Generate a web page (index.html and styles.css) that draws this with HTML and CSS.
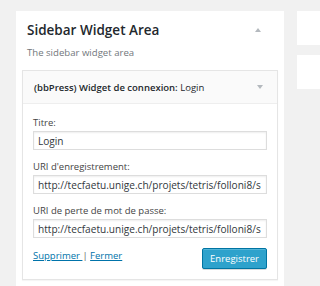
FILE: index.html
```html
<!DOCTYPE html>
<html>
<head>
<meta charset="utf-8">
<link rel="stylesheet" href="styles.css">
</head>
<body>
<div class="page">
  <div class="area">
    <div class="area-head">
      <h2 class="area-title">Sidebar Widget Area</h2>
      <span class="arrow-up"></span>
    </div>
    <p class="area-desc">The sidebar widget area</p>
    <div class="widget">
      <div class="widget-head">
        <span class="widget-title"><b>(bbPress) Widget de connexion:</b> Login</span>
        <span class="arrow-down"></span>
      </div>
      <div class="widget-body">
        <label class="field">
          <span class="lbl">Titre:</span>
          <input class="inp" type="text" value="Login">
        </label>
        <label class="field">
          <span class="lbl">URI d'enregistrement:</span>
          <input class="inp" type="text" value="http://tecfaetu.unige.ch/projets/tetris/folloni8/s">
        </label>
        <label class="field">
          <span class="lbl">URI de perte de mot de passe:</span>
          <input class="inp" type="text" value="http://tecfaetu.unige.ch/projets/tetris/folloni8/s">
        </label>
        <div class="actions">
          <div class="links"><a href="#">Supprimer </a> <span class="sep">|</span> <a href="#">Fermer</a></div>
          <button class="save">Enregistrer</button>
        </div>
      </div>
    </div>
  </div>
  <div class="side">
    <div class="side-box"></div>
    <div class="side-box"></div>
  </div>
</div>
</body>
</html>
```
FILE: styles.css
```css
html, body {
  margin: 0;
  padding: 0;
  background: #f1f1f1;
  font-family: "Open Sans", "Noto Sans", sans-serif;
  color: #444;
  overflow: hidden;
}
.page {
  display: flex;
  gap: 13px;
  padding: 11px 0 0 16px;
  height: 286px;
  box-sizing: border-box;
}
.area {
  width: 268px;
  flex: none;
  background: #fff;
  padding: 0 6px;
  box-sizing: border-box;
}
.area-head {
  display: flex;
  align-items: center;
  justify-content: space-between;
  padding: 9px 17px 0 5px;
}
.area-title {
  margin: 0;
  font-size: 13.5px;
  font-weight: 600;
  color: #23282d;
  line-height: 20px;
}
.arrow-up {
  width: 0; height: 0;
  border-left: 3.5px solid transparent;
  border-right: 3.5px solid transparent;
  border-bottom: 4px solid #b4b9be;
}
.area-desc {
  margin: 6px 0 0 5px;
  font-size: 9.6px;
  color: #72777c;
  line-height: 14px;
}
.widget {
  margin-top: 10px;
  border: 1px solid #e5e5e5;
  box-shadow: 0 1px 1px rgba(0,0,0,0.04);
}
.widget-head {
  display: flex;
  align-items: center;
  justify-content: space-between;
  height: 32px;
  padding: 0 14px 0 11px;
  background: #fafafa;
  border-bottom: 1px solid #eee;
}
.widget-title {
  font-size: 9.5px;
  color: #23282d;
}
.widget-title b { font-weight: 600; }
.arrow-down {
  width: 0; height: 0;
  border-left: 3.5px solid transparent;
  border-right: 3.5px solid transparent;
  border-top: 4px solid #b4b9be;
}
.widget-body {
  padding: 12px 10px 10px 10px;
}
.field {
  display: block;
  margin-bottom: 10px;
}
.lbl {
  display: block;
  font-size: 9.5px;
  color: #444;
  line-height: 14px;
  margin-bottom: 1px;
}
.inp {
  display: block;
  width: 100%;
  box-sizing: border-box;
  height: 19px;
  border: 1px solid #ddd;
  box-shadow: inset 0 1px 2px rgba(0,0,0,0.07);
  padding: 0 4px;
  font-family: "Open Sans", "Noto Sans", sans-serif;
  font-size: 10.1px;
  color: #32373c;
  background: #fff;
  margin: 0;
  outline: none;
}
.actions {
  display: flex;
  justify-content: space-between;
  align-items: flex-start;
  margin-top: 1px;
}
.links {
  font-size: 9.5px;
  padding-top: 1px;
  color: #444;
}
.links a { color: #0073aa; }
.sep { color: #666; }
.save {
  background: #2ea2cc;
  border: 1px solid #0074a2;
  border-radius: 2px;
  color: #fff;
  font-family: "Open Sans", "Noto Sans", sans-serif;
  font-size: 9.5px;
  height: 21px;
  padding: 0 7px;
  box-shadow: inset 0 1px 0 rgba(120,200,230,0.5), 0 1px 0 rgba(0,0,0,0.15);
}
.side {
  display: flex;
  flex-direction: column;
  gap: 10px;
  width: 40px;
}
.side-box {
  background: #fff;
  height: 34px;
}
```
